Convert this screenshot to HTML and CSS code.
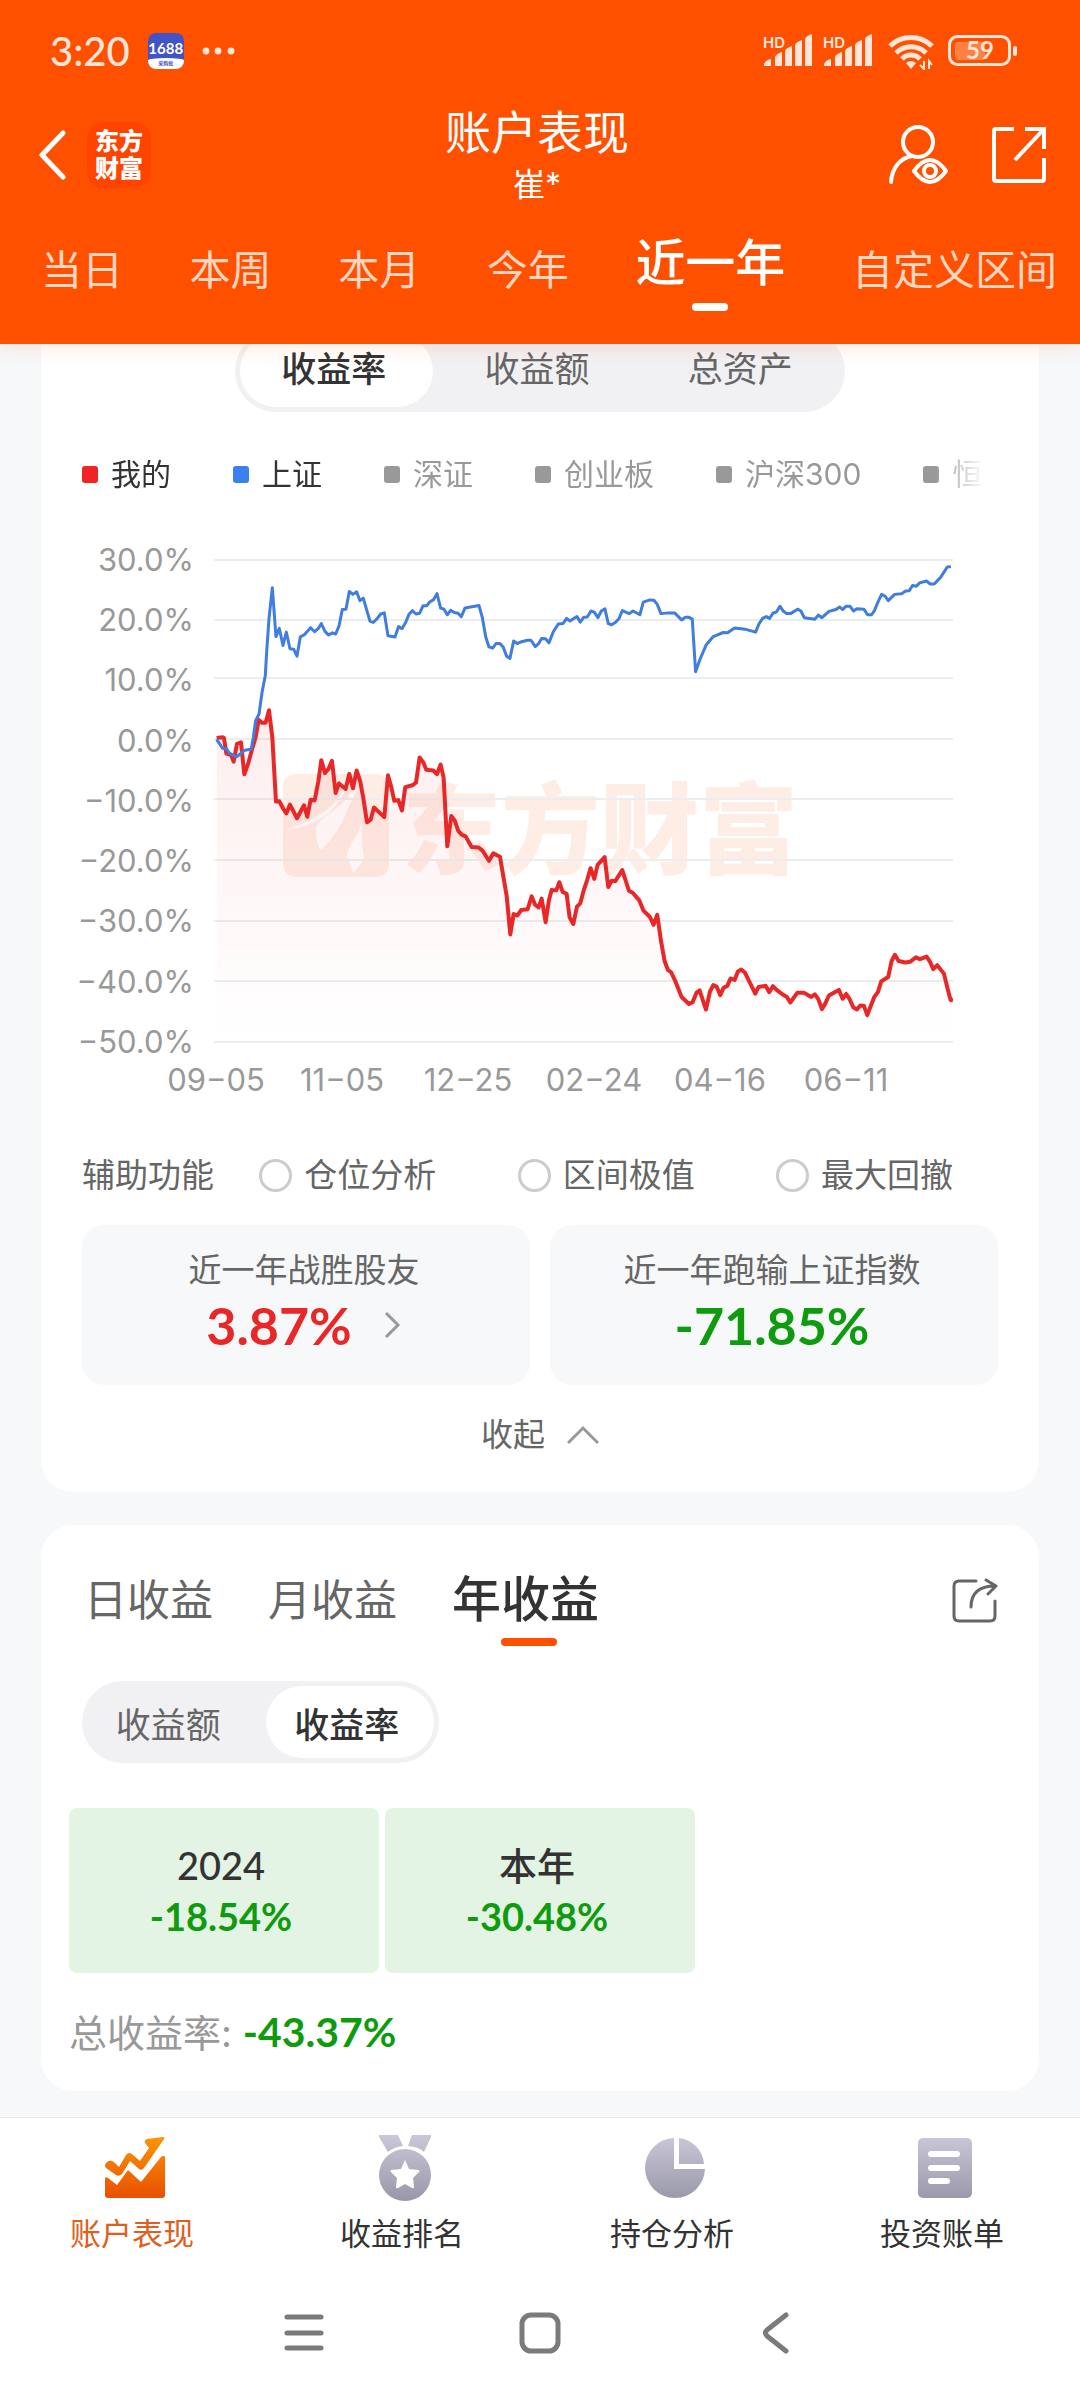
FILE: index.html
```html
<!DOCTYPE html>
<html lang="zh-CN">
<head>
    <meta charset="UTF-8">
    <meta name="viewport" content="width=device-width, initial-scale=1.0">
    <title>账户表现</title>
    <link rel="stylesheet" href="styles.css">
</head>
<body>
    <header class="header">
        <div class="status-bar">
            <div class="status-left">
                <span class="time">3:20</span>
                <span class="app-badge"><b>1688</b><i>采购批</i></span>
                <svg width="34" height="8" viewBox="0 0 34 8" fill="#ffe6d8"><circle cx="4" cy="4" r="3.4"/><circle cx="16" cy="4" r="3.4"/><circle cx="29" cy="4" r="3.4"/></svg>
            </div>
            <div class="status-right">
                <svg width="52" height="38" viewBox="0 0 52 38" fill="#ffe6d8">
                    <text class="hd" x="1" y="16">HD</text>
                    <path d="M2 34v-2a9 9 0 0 1 7-5v7zM13 34v-9q1-3 7-5v14zM23 34V19q1-3 7-5v20zM33 34V13q1-3 7-5v26zM43 34V7q1-3 7-5v32z"/>
                </svg>
                <svg width="52" height="38" viewBox="0 0 52 38" fill="#ffe6d8">
                    <text class="hd" x="1" y="16">HD</text>
                    <path d="M2 34v-2a9 9 0 0 1 7-5v7zM13 34v-9q1-3 7-5v14zM23 34V19q1-3 7-5v20zM33 34V13q1-3 7-5v26zM43 34V7q1-3 7-5v32z"/>
                </svg>
                <svg class="wifi" width="46" height="38" viewBox="0 0 46 38" fill="none" stroke="#ffe6d8" stroke-width="5">
                    <path d="M2 14a30 30 0 0 1 42 0M8 21a21 21 0 0 1 30 0M14 27a12 12 0 0 1 18 0"/>
                    <path d="M18 31q5-4 10 0l-5 6z" fill="#ffe6d8" stroke="none"/>
                    <path d="M36 29v8l-4-4M41 37v-8l3 4" stroke-width="2"/>
                </svg>
                <svg width="70" height="32" viewBox="0 0 70 32">
                    <rect x="1.5" y="1.5" width="60" height="28" rx="8" fill="none" stroke="#ffe6d8" stroke-width="3"/>
                    <rect x="7" y="7" width="30" height="18" rx="3" fill="#ff8043"/>
                    <rect x="65" y="11" width="4" height="10" rx="2" fill="#ffe6d8"/>
                    <text class="battery-level" x="32" y="24" text-anchor="middle" fill="#ffe6d8">59</text>
                </svg>
            </div>
        </div>

        <div class="title-bar">
            <div class="title-left">
                <button class="icon-btn" aria-label="返回">
                    <svg width="28" height="50" viewBox="0 0 28 50" fill="none" stroke="#fff" stroke-width="5" stroke-linecap="round" stroke-linejoin="round"><path d="M24 3L3 25l21 22"/></svg>
                </button>
                <a class="brand" href="#">东方<br>财富</a>
            </div>
            <div class="title-center">
                <h1>账户表现</h1>
                <p>崔*</p>
            </div>
            <div class="title-right">
                <button class="icon-btn" aria-label="查看账户">
                    <svg width="62" height="62" viewBox="0 0 62 62" fill="none" stroke="#fff" stroke-width="4" stroke-linecap="round">
                        <circle cx="30" cy="18" r="15"/>
                        <path d="M3 58C4 44 12 34 24 32"/>
                        <path d="M26 47q8-11 16-11t16 11q-8 11-16 11T26 47z" stroke-linejoin="round"/>
                        <circle cx="42" cy="47" r="6"/>
                    </svg>
                </button>
                <button class="icon-btn" aria-label="分享">
                    <svg width="56" height="58" viewBox="0 0 56 58" fill="none" stroke="#fff" stroke-width="4">
                        <path d="M22 3H4q-2 0-2 2v48q0 2 2 2h46q2 0 2-2V32"/>
                        <path d="M33 3h19v20M52 3L23 34"/>
                    </svg>
                </button>
            </div>
        </div>

        <nav class="period-tabs">
            <a href="#">当日</a>
            <a href="#">本周</a>
            <a href="#">本月</a>
            <a href="#">今年</a>
            <a href="#" class="active">近一年</a>
            <a href="#">自定义区间</a>
        </nav>
    </header>

    <main class="content">
        <section class="card card-chart">
            <div class="segment segment-wide">
                <button class="active">收益率</button>
                <button>收益额</button>
                <button>总资产</button>
            </div>

            <ul class="legend">
                <li class="mine">我的</li>
                <li class="index">上证</li>
                <li>深证</li>
                <li>创业板</li>
                <li>沪深300</li>
                <li>恒生</li>
            </ul>

            <svg class="chart" viewBox="0 0 916 580">
                <defs>
                    <linearGradient id="area" x1="0" y1="0" x2="0" y2="1">
                        <stop offset="0" stop-color="#f02222" stop-opacity=".08"/>
                        <stop offset="1" stop-color="#f02222" stop-opacity="0"/>
                    </linearGradient>
                </defs>

                <!-- 水印 -->
                <g class="watermark">
                    <path fill-rule="evenodd" d="M215 244h78q14 0 14 14v75q0 14-14 14h-78q-14 0-14-14v-75q0-14 14-14zM203 300q45-5 61-41l10-9q-4 18-22 30-14 9-18 17 0 18 5 23 20-20 28-44 6-12 10-18 10 28-4 50-12 17-6 23l4 12 11-13q-4-26-1-50-2-22-10-27l-7 1q-10 30-61 46z"/>
                    <text x="320" y="336">东方财富</text>
                </g>

                <g class="grid">
                    <path d="M132 30h739M132 90h739M132 148h739M132 209h739M132 269h739M132 330h739M132 391h739M132 451h739M132 512h739"/>
                </g>

                <g class="axis axis-y">
                    <text x="112" y="41">30.0%</text>
                    <text x="112" y="101">20.0%</text>
                    <text x="112" y="161">10.0%</text>
                    <text x="112" y="222">0.0%</text>
                    <text x="112" y="282">−10.0%</text>
                    <text x="112" y="342">−20.0%</text>
                    <text x="112" y="402">−30.0%</text>
                    <text x="112" y="463">−40.0%</text>
                    <text x="112" y="523">−50.0%</text>
                </g>
                <g class="axis axis-x">
                    <text x="134" y="561">09−05</text>
                    <text x="260" y="561">11−05</text>
                    <text x="386" y="561">12−25</text>
                    <text x="512" y="561">02−24</text>
                    <text x="638" y="561">04−16</text>
                    <text x="764" y="561">06−11</text>
                </g>

                <g transform="translate(-22 0) scale(.3333 .37)">
                    <path fill="url(#area)" d="M470 562L488 560 499 604 521 626 531 578 543 574 553 660 577 590 596 513 617 521 627 487 637 560 648 734 679 766 690 742 711 779 732 744 742 775 752 729 764 731 784 622 795 657 816 624 827 711 837 685 857 700 868 659 879 698 890 650 901 680 921 790 942 750 973 776 984 663 1003 732 1026 758 1036 695 1068 683 1079 615 1099 648 1131 660 1142 634 1151 670 1162 855 1174 773 1206 824 1235 857 1256 858 1287 894 1300 874 1320 883 1340 988 1351 1093 1361 1038 1403 1025 1415 990 1436 1020 1445 996 1457 1060 1475 973 1498 952 1520 983 1540 1065 1561 1009 1592 914 1603 943 1634 884 1645 965 1666 949 1687 919 1707 975 1738 1001 1781 1067 1792 1040 1814 1165 1845 1217 1887 1281 1919 1244 1938 1296 1960 1230 1981 1257 2044 1188 2086 1253 2139 1233 2191 1277 2233 1251 2275 1268 2286 1295 2337 1243 2391 1296 2422 1311 2464 1220 2505 1148 2537 1169 2600 1153 2652 1199 2672 1270V1384H470z"/>
                    <polyline class="line-mine" points="470,562 488,560 492,562 499,604 513,608 521,626 531,578 543,574 553,660 565,630 577,590 587,560 596,513 606,521 617,521 627,487 637,560 648,734 658,733 669,752 679,766 690,742 711,779 732,744 742,775 752,729 764,731 775,680 784,622 795,657 806,645 816,624 827,711 837,685 857,700 868,659 879,698 890,650 901,680 911,730 921,790 932,783 942,750 973,776 984,663 994,695 1003,732 1015,730 1026,758 1036,695 1057,690 1068,683 1079,615 1090,628 1099,648 1120,650 1131,660 1142,634 1151,670 1162,855 1174,773 1184,785 1195,813 1206,824 1217,828 1235,857 1256,858 1268,867 1287,894 1300,874 1320,883 1340,988 1351,1093 1361,1038 1372,1042 1384,1027 1403,1025 1415,990 1425,1012 1436,1020 1445,996 1457,1060 1467,1000 1475,973 1489,974 1498,952 1508,978 1520,983 1529,1047 1540,1065 1551,1018 1561,1009 1571,975 1582,945 1592,914 1603,943 1613,905 1634,884 1645,965 1655,948 1666,949 1687,919 1707,975 1719,981 1738,1001 1750,1028 1770,1046 1781,1067 1792,1040 1803,1110 1814,1165 1824,1189 1834,1196 1845,1217 1865,1262 1887,1281 1898,1276 1910,1250 1919,1244 1938,1296 1950,1248 1960,1230 1970,1234 1981,1257 1991,1237 2002,1232 2012,1212 2024,1216 2034,1193 2044,1188 2055,1196 2086,1253 2096,1235 2117,1232 2128,1249 2139,1233 2150,1243 2171,1257 2181,1262 2191,1277 2212,1251 2233,1251 2254,1262 2265,1255 2275,1268 2286,1295 2296,1280 2307,1258 2323,1250 2337,1243 2348,1267 2359,1254 2369,1268 2380,1290 2391,1296 2401,1285 2412,1286 2422,1311 2443,1262 2454,1249 2464,1220 2485,1208 2495,1165 2505,1148 2516,1165 2537,1169 2550,1167 2568,1155 2580,1160 2600,1153 2611,1168 2620,1187 2632,1176 2652,1199 2664,1243 2672,1270 2679,1271"/>
                    <polyline class="line-index" points="470,566 488,590 500,592 508,603 530,613 552,596 574,592 580,560 587,515 597,498 606,440 616,393 620,330 627,240 637,156 648,288 658,266 669,312 679,276 690,321 701,322 711,341 721,289 733,283 752,264 764,275 775,266 784,253 795,274 806,284 817,278 827,281 837,260 847,215 858,214 868,166 879,174 890,167 900,191 910,184 920,216 930,246 940,250 951,240 962,227 973,224 984,286 1005,289 1016,261 1026,267 1037,250 1047,228 1057,218 1068,227 1079,225 1089,205 1100,205 1110,194 1120,189 1131,172 1142,211 1152,214 1162,229 1172,217 1183,223 1194,225 1204,234 1215,211 1257,204 1267,236 1277,288 1287,316 1298,319 1308,307 1320,307 1330,317 1340,341 1350,347 1361,300 1372,307 1385,302 1402,298 1413,298 1426,315 1436,307 1445,293 1457,294 1467,305 1480,275 1495,254 1509,253 1520,239 1530,246 1551,234 1561,249 1571,236 1582,235 1593,219 1603,222 1614,237 1624,219 1635,213 1645,253 1655,256 1666,250 1677,240 1687,218 1708,226 1719,219 1740,229 1750,195 1770,189 1782,190 1792,201 1803,226 1825,224 1844,224 1865,243 1876,236 1887,236 1897,241 1907,383 1920,350 1939,310 1960,288 1990,277 2003,278 2024,265 2055,268 2087,276 2097,254 2108,239 2119,234 2129,239 2139,225 2150,221 2160,206 2170,219 2180,226 2192,226 2213,214 2223,219 2233,237 2265,241 2275,230 2286,237 2307,220 2328,215 2339,208 2348,215 2359,206 2370,206 2381,219 2391,213 2412,214 2423,229 2435,229 2444,217 2454,195 2465,174 2476,179 2485,191 2504,174 2525,172 2537,165 2548,164 2558,150 2569,152 2579,143 2600,138 2611,146 2623,146 2642,128 2662,100 2673,99"/>
                </g>
            </svg>

            <div class="tools">
                <span class="tools-title">辅助功能</span>
                <label><input type="radio" name="tool">仓位分析</label>
                <label><input type="radio" name="tool">区间极值</label>
                <label><input type="radio" name="tool">最大回撤</label>
            </div>

            <div class="stats">
                <a class="stat" href="#">
                    <span class="stat-label">近一年战胜股友</span>
                    <span class="stat-value up">3.87%
                        <svg width="18" height="28" viewBox="0 0 18 28" fill="none" stroke="#999" stroke-width="3"><path d="M2 2l12 12L2 26"/></svg>
                    </span>
                </a>
                <div class="stat">
                    <span class="stat-label">近一年跑输上证指数</span>
                    <span class="stat-value down">-71.85%</span>
                </div>
            </div>

            <button class="collapse">收起
                <svg width="32" height="20" viewBox="0 0 32 20" fill="none" stroke="#999" stroke-width="3"><path d="M1 18L16 3l15 15"/></svg>
            </button>
        </section>

        <section class="card card-yield">
            <div class="yield-head">
                <nav class="yield-tabs">
                    <a href="#">日收益</a>
                    <a href="#">月收益</a>
                    <a href="#" class="active">年收益</a>
                </nav>
                <button class="icon-btn" aria-label="分享收益">
                    <svg width="46" height="46" viewBox="0 0 46 46" fill="none" stroke="#666" stroke-width="3" stroke-linecap="round" stroke-linejoin="round">
                        <path d="M24 4H7Q2 4 2 9v30q0 5 5 5h31q5 0 5-5V24"/>
                        <path d="M19 30C19 17 26 9 43 9M34 3l10 6-8 8"/>
                    </svg>
                </button>
            </div>

            <div class="segment segment-small">
                <button>收益额</button>
                <button class="active">收益率</button>
            </div>

            <div class="years">
                <div class="year"><span>2024</span><b>-18.54%</b></div>
                <div class="year"><span>本年</span><b>-30.48%</b></div>
            </div>

            <p class="total">总收益率: <b>-43.37%</b></p>
        </section>
    </main>

    <nav class="bottom-nav">
        <a href="#" class="active">
            <svg width="68" height="68" viewBox="0 0 68 68">
                <defs>
                    <linearGradient id="orange" x1="0" y1="0" x2="0" y2="68" gradientUnits="userSpaceOnUse"><stop offset="0" stop-color="#fb9a06"/><stop offset="1" stop-color="#e84c00"/></linearGradient>
                    <linearGradient id="grey" x1="0" y1="0" x2="0" y2="68" gradientUnits="userSpaceOnUse"><stop offset="0" stop-color="#cbc9da"/><stop offset="1" stop-color="#9897a8"/></linearGradient>
                </defs>
                <path fill="url(#orange)" d="M5 30q4-5 9 0l4 4 7-12q3-4 7 0l7 6 9-13-4-5q-1-3 2-4l16-2q2 0 1 2L43 35q-2 3-5 1l-9-8-8 13q-3 3-6 1L5 35q-2-2 0-5z"/>
                <path fill="url(#orange)" d="M4 46q0-3 3-1l9 7 11-15 13 12 20-25q4-3 4 1v37q0 3-3 3H7q-3 0-3-3z"/>
            </svg>
            <span>账户表现</span>
        </a>
        <a href="#">
            <svg width="68" height="68" viewBox="0 0 68 68" fill="url(#grey)">
                <path d="M8 2h19l5 11q-9 1-15 6L8 4zM41 2h19v2l-7 15q-5-5-16-6z"/>
                <path fill-rule="evenodd" d="M34 16a26 26 0 1 1 0 52 26 26 0 0 1 0-52zM34 27l-4 9-10 1q-1 1 0 2l6 6-1 9q0 2 2 1l7-4 7 4q2 1 2-1l-1-9 6-6q1-1 0-2l-10-1z"/>
            </svg>
            <span>收益排名</span>
        </a>
        <a href="#">
            <svg width="68" height="68" viewBox="0 0 68 68" fill="url(#grey)">
                <path d="M33 5v31h31A30 30 0 1 1 33 5z"/>
                <path d="M38 5a28 28 0 0 1 25 26H38z"/>
            </svg>
            <span>持仓分析</span>
        </a>
        <a href="#">
            <svg width="68" height="68" viewBox="0 0 68 68">
                <rect x="7" y="5" width="54" height="60" rx="5" fill="url(#grey)"/>
                <path d="M20 21h26M20 35h26M20 48h16" stroke="#fff" stroke-width="6" stroke-linecap="round"/>
            </svg>
            <span>投资账单</span>
        </a>
    </nav>

    <div class="system-nav">
        <button class="icon-btn" aria-label="最近任务">
            <svg width="42" height="42" viewBox="0 0 42 42" stroke="#7b7b7b" stroke-width="5" stroke-linecap="round"><path d="M4 5h34M4 21h34M4 36h34"/></svg>
        </button>
        <button class="icon-btn" aria-label="主屏幕">
            <svg width="42" height="42" viewBox="0 0 42 42" fill="none" stroke="#7b7b7b" stroke-width="5"><rect x="3" y="3" width="36" height="36" rx="9"/></svg>
        </button>
        <button class="icon-btn" aria-label="后退">
            <svg width="42" height="42" viewBox="0 0 42 42" fill="none" stroke="#7b7b7b" stroke-width="5" stroke-linecap="round" stroke-linejoin="round"><path d="M31 3L12 18q-3 3 0 6l19 15"/></svg>
        </button>
    </div>
</body>
</html>
```
FILE: styles.css
```css
:root {
    --primary-color: #ff5000;
    --background-color: #f6f8fa;
    --card-color: #ffffff;
    --text-color: #333333;
    --text-soft: #666666;
    --text-light: #999999;
    --up-color: #e82828;
    --down-color: #0e9b0e;
    --font-text: Inter, "Noto Sans CJK SC", sans-serif;
    --font-number: Lato, "Noto Sans CJK SC", sans-serif;
}

* {
    box-sizing: border-box;
    margin: 0;
    padding: 0;
}

body {
    display: flex;
    flex-direction: column;
    min-height: 100vh;
    background-color: var(--background-color);
    color: var(--text-color);
    font-family: var(--font-text);
}

a {
    color: inherit;
    text-decoration: none;
}

button {
    border: none;
    background: none;
    color: inherit;
    font-family: inherit;
    cursor: pointer;
}

svg {
    display: block;
}

/* 顶部 */
.header {
    position: relative;
    z-index: 1;
    height: 344px;
    background-color: var(--primary-color);
    color: #fff;
    box-shadow: 0 2px 20px rgba(255, 80, 0, 0.15);
}

.status-bar {
    display: flex;
    justify-content: space-between;
    align-items: center;
    height: 102px;
    padding: 0 62px 0 50px;
    color: #ffe6d8;
}

.status-left,
.status-right {
    display: flex;
    align-items: center;
}

.status-left {
    gap: 18px;
}

.status-right {
    gap: 8px;
}

.time {
    font-family: var(--font-number);
    font-size: 40px;
    line-height: 48px;
    font-weight: 500;
}

.app-badge {
    display: flex;
    flex-direction: column;
    justify-content: space-between;
    align-items: center;
    width: 36px;
    height: 36px;
    padding-top: 6px;
    border-radius: 8px;
    background-color: #4253c8;
    color: #fff;
    overflow: hidden;
}

.app-badge b {
    font-family: var(--font-number);
    font-size: 15px;
    line-height: 18px;
}

.app-badge i {
    width: 100%;
    border-radius: 50% 50% 0 0 / 20% 20% 0 0;
    background-color: #fff;
    color: #4253c8;
    font-size: 5px;
    line-height: 11px;
    font-style: normal;
    font-weight: bold;
    text-align: center;
}

.hd {
    font-size: 15px;
    font-weight: 600;
}

.battery-level {
    font-family: var(--font-number);
    font-size: 24px;
    font-weight: bold;
}

.wifi {
    margin: 0 6px;
}

.title-bar {
    display: grid;
    grid-template-columns: 1fr auto 1fr;
    align-items: center;
    height: 106px;
    padding: 0 32px;
}

.title-left,
.title-right {
    display: flex;
    align-items: center;
}

.title-left {
    gap: 20px;
    padding-left: 7px;
}

.title-right {
    justify-content: flex-end;
    gap: 42px;
}

.brand {
    width: 64px;
    height: 66px;
    padding: 6px 0;
    border-radius: 16px;
    background-color: #ff4400;
    font-size: 24px;
    line-height: 27px;
    font-weight: 900;
    text-align: center;
}

.title-center {
    padding-right: 6px;
    text-align: center;
}

.title-center h1 {
    font-size: 46px;
    line-height: 60px;
    font-weight: normal;
}

.title-center p {
    font-size: 32px;
    line-height: 46px;
}

.period-tabs {
    display: flex;
    justify-content: space-between;
    align-items: center;
    height: 124px;
    padding: 0 23px 0 41px;
    color: #ffd6c2;
    font-size: 41px;
    line-height: 60px;
}

.period-tabs .active {
    position: relative;
    padding-bottom: 14px;
    color: #fff;
    font-size: 50px;
    font-weight: 500;
}

.period-tabs .active::after,
.yield-tabs .active::after {
    content: "";
    position: absolute;
    left: 50%;
    bottom: -4px;
    width: 36px;
    height: 8px;
    margin-left: -18px;
    border-radius: 4px;
    background-color: #fff;
}

/* 卡片 */
.content {
    flex: 1;
    padding: 0 41px 26px;
}

.card {
    padding: 41px;
    border-radius: 32px;
    background-color: var(--card-color);
}

/* 第一张卡片向上滚动到顶部栏下面 */
.card-chart {
    margin-top: -55px;
    padding-bottom: 32px;
}

.card-yield {
    margin-top: 33px;
    padding-bottom: 31px;
}

.segment {
    display: grid;
    grid-auto-columns: 1fr;
    grid-auto-flow: column;
    gap: 10px;
    height: 82px;
    padding: 5px;
    border-radius: 41px;
    background-color: #f1f1f4;
}

.segment button {
    padding-right: 6px;
    border-radius: 36px;
    color: var(--text-soft);
    font-size: 35px;
}

.segment .active {
    background-color: #fff;
    color: var(--text-color);
    font-weight: 500;
}

.segment-wide {
    width: 610px;
    margin: 0 auto;
}

.segment-wide button {
    padding-bottom: 10px;
}

.segment-small {
    width: 357px;
    margin-top: 47px;
}

.legend {
    display: flex;
    gap: 62px;
    margin-top: 42px;
    overflow: hidden;
    list-style: none;
    color: var(--text-light);
    font-size: 30px;
    line-height: 40px;
    white-space: nowrap;
    -webkit-mask-image: linear-gradient(to left, transparent 14px, #000 62px);
    mask-image: linear-gradient(to left, transparent 14px, #000 62px);
}

.legend li {
    display: flex;
    flex-shrink: 0;
    align-items: center;
    gap: 13px;
}

.legend li::before {
    content: "";
    width: 16px;
    height: 17px;
    border-radius: 3px;
    background-color: #999;
}

.legend .mine,
.legend .index {
    color: var(--text-color);
}

.legend .mine::before {
    background-color: #f02424;
}

.legend .index::before {
    background-color: #3a80ee;
}

/* 收益曲线 */
.chart {
    width: 100%;
    margin-top: 36px;
    overflow: visible;
}

.watermark {
    fill: #f4590f;
    opacity: 0.1;
}

.watermark text {
    font-size: 99px;
    font-weight: 900;
}

.grid {
    stroke: #ebedf1;
    stroke-width: 2;
}

.axis {
    fill: var(--text-light);
    font-size: 31px;
}

.axis-y {
    text-anchor: end;
}

.axis-x {
    text-anchor: middle;
}

.line-mine,
.line-index {
    fill: none;
    stroke-linejoin: round;
    vector-effect: non-scaling-stroke;
}

.line-mine {
    stroke: #e82828;
    stroke-width: 4;
}

.line-index {
    stroke: #3f7dde;
    stroke-width: 3;
}

.tools {
    display: flex;
    justify-content: space-between;
    align-items: center;
    margin-top: 41px;
    padding-right: 45px;
    color: var(--text-soft);
    font-size: 33px;
    line-height: 48px;
}

.tools label {
    display: flex;
    align-items: center;
    gap: 12px;
}

.tools-title + label {
    margin-left: -36px;
}

.tools input {
    width: 33px;
    height: 33px;
    border: 3px solid #ccc;
    border-radius: 50%;
    appearance: none;
}

.tools input:checked {
    border: 10px solid var(--primary-color);
}

.stats {
    display: grid;
    grid-template-columns: 1fr 1fr;
    gap: 20px;
    margin-top: 26px;
}

.stat {
    display: flex;
    flex-direction: column;
    align-items: center;
    height: 160px;
    padding: 21px 4px 0 0;
    border-radius: 22px;
    background-color: #f7f8fa;
}

.stat-label {
    color: var(--text-soft);
    font-size: 33px;
    line-height: 48px;
}

.stat-value {
    display: flex;
    align-items: center;
    gap: 32px;
    font-family: var(--font-number);
    font-size: 52px;
    line-height: 62px;
    font-weight: bold;
}

.up {
    color: var(--up-color);
}

.down {
    color: var(--down-color);
}

.collapse {
    display: flex;
    align-items: center;
    gap: 22px;
    margin: 25px auto 0;
    color: var(--text-soft);
    font-size: 32px;
    line-height: 50px;
}

/* 年收益 */
.yield-head {
    display: flex;
    justify-content: space-between;
    align-items: center;
}

.yield-tabs {
    display: flex;
    align-items: center;
    gap: 55px;
    padding-left: 2px;
    color: var(--text-soft);
    font-size: 43px;
    line-height: 68px;
}

.yield-tabs .active {
    position: relative;
    color: var(--text-color);
    font-size: 49px;
    font-weight: 500;
}

.yield-tabs .active::after {
    bottom: -12px;
    width: 56px;
    margin-left: -25px;
    background-color: var(--primary-color);
}

.years {
    display: grid;
    grid-template-columns: repeat(3, 1fr);
    gap: 6px;
    margin: 45px -13px 0;
}

.year {
    display: flex;
    flex-direction: column;
    align-items: center;
    height: 165px;
    padding: 32px 6px 0 0;
    border-radius: 8px;
    background-color: #e3f4e4;
    font-family: var(--font-number);
    font-size: 38px;
    line-height: 51px;
    font-weight: 500;
}

.year b {
    color: var(--down-color);
}

.total {
    margin: 32px -13px 0;
    color: var(--text-light);
    font-size: 38px;
    line-height: 54px;
}

.total b {
    color: var(--down-color);
    font-family: var(--font-number);
    font-size: 41px;
}

/* 底部导航 */
.bottom-nav {
    display: grid;
    grid-template-columns: repeat(4, 1fr);
    height: 148px;
    padding-top: 15px;
    border-top: 1px solid #e8e9eb;
    background-color: #fff;
}

.bottom-nav a {
    display: flex;
    flex-direction: column;
    align-items: center;
    gap: 12px;
    font-size: 31px;
    line-height: 42px;
}

.bottom-nav span {
    padding-right: 6px;
}

.bottom-nav .active {
    color: #dc6020;
}

.system-nav {
    display: flex;
    justify-content: center;
    align-items: center;
    gap: 194px;
    height: 135px;
    background-color: #fff;
}
```
